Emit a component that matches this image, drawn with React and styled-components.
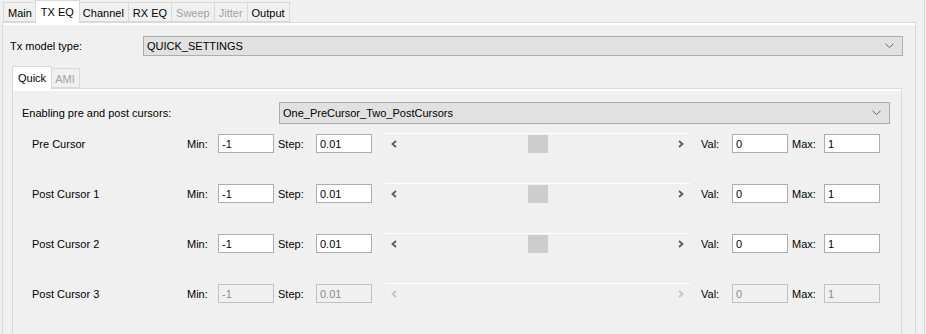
import styled, { createGlobalStyle } from 'styled-components';

const GlobalStyle = createGlobalStyle`
    html, body {
        margin: 0;
        padding: 0;
        background: #f0f0f0;
    }
    body {
        font-family: "Liberation Sans", Arial, sans-serif;
        font-size: 11px;
        color: #000;
    }
`

const Window = styled.div`
    width: 925px;
    height: 334px;
    overflow: hidden;
    border-right: 1px solid #dadada;
    background: #f0f0f0;
    display: flex;
    flex-direction: column;
    padding: 0 8px 0 2px;
    box-sizing: border-box;
`

const TabBar = styled.div`
    display: flex;
    align-items: flex-end;
    height: 22px;
    padding-left: ${p => p.$inset || 0}px;
    position: relative;
    z-index: 1;
`

const Tab = styled.div`
    box-sizing: border-box;
    height: ${p => (p.$active ? 23 : 20)}px;
    padding: 0 ${p => (p.$active ? 5 : 4)}px;
    margin-left: ${p => (p.$active ? -2 : -1)}px;
    margin-right: ${p => (p.$active ? -1 : 0)}px;
    margin-bottom: ${p => (p.$active ? -1 : 0)}px;
    display: flex;
    align-items: center;
    padding-top: ${p => (p.$active ? 0 : 1)}px;
    border: 1px solid #d9d9d9;
    border-bottom: ${p => (p.$active ? 'none' : '1px solid #d9d9d9')};
    background: ${p => (p.$active ? '#fff' : '#f0f0f0')};
    color: ${p => (p.$disabled ? '#a3a3a3' : '#000')};
    position: relative;
    z-index: ${p => (p.$active ? 2 : 1)};
    white-space: nowrap;

    &:first-child {
        margin-left: 0;
    }
`

const Pane = styled.div`
    flex: 1;
    box-sizing: border-box;
    border: 1px solid #d9d9d9;
    border-bottom: none;
    box-shadow: inset 0 2px 0 #fff;
    padding: ${p => p.$pad};
    display: flex;
    flex-direction: column;
`

const FieldRow = styled.div`
    display: grid;
    grid-template-columns: ${p => p.$labelWidth}px 1fr;
    align-items: center;
`

const Combo = styled.div`
    height: ${p => p.$h}px;
    box-sizing: border-box;
    background: #e1e1e1;
    border: 1px solid #adadad;
    display: flex;
    align-items: center;
    justify-content: space-between;
    padding: 0 8px 0 3px;
`

const Chevron = () => (
    <svg width="9" height="6" viewBox="0 0 9 6">
        <polyline points="0.5,0.8 4.5,4.6 8.5,0.8" fill="none" stroke="#666" strokeWidth="1" />
    </svg>
)

const SubTabs = styled.div`
    margin: 10px 1px 0 2px;
    flex: 1;
    display: flex;
    flex-direction: column;
`

const CursorList = styled.div`
    display: flex;
    flex-direction: column;
    gap: 31px;
    margin-top: 10px;
`

const CursorRow = styled.div`
    display: grid;
    grid-template-columns: 165px 31px 60px 38px 69px 316px 31px 60px 32px 56px;
    align-items: center;
    height: 19px;
    color: #000;
`

const RowLabel = styled.span`
    padding-left: 10px;
`

const Field = styled.div`
    width: 56px;
    height: 19px;
    box-sizing: border-box;
    border: 1px solid ${p => (p.$disabled ? '#c2c2c2' : '#adadad')};
    background: ${p => (p.$disabled ? '#f0f0f0' : '#fff')};
    color: ${p => (p.$disabled ? '#8c8c8c' : '#000')};
    padding-left: 3px;
    display: flex;
    align-items: center;
`

const Slider = styled.div`
    width: 305px;
    height: 20px;
    margin-top: -1px;
    box-sizing: border-box;
    border-top: 1px solid #fff;
    display: flex;
    align-items: center;
    padding: 0 6px;
`

const Track = styled.div`
    flex: 1;
    display: flex;
    justify-content: center;
    align-items: center;
`

const Thumb = styled.div`
    width: 20px;
    height: 18px;
    background: #cdcdcd;
`

const Arrow = ({ dir, muted }) => (
    <svg width="6" height="8" viewBox="0 0 6 8">
        <polyline
            points={dir === 'left' ? '5,1 1.5,4 5,7' : '1,1 4.5,4 1,7'}
            fill="none"
            stroke={muted ? '#c4c4c4' : '#5a5a5a'}
            strokeWidth="1.8"
        />
    </svg>
)

const cursors = [
    { name: 'Pre Cursor' },
    { name: 'Post Cursor 1' },
    { name: 'Post Cursor 2' },
    { name: 'Post Cursor 3', disabled: true },
]

const App = () => {
    return (
        <>
            <GlobalStyle />
            <Window>
                <TabBar $inset={1}>
                    <Tab>Main</Tab>
                    <Tab $active>TX EQ</Tab>
                    <Tab>Channel</Tab>
                    <Tab>RX EQ</Tab>
                    <Tab $disabled>Sweep</Tab>
                    <Tab $disabled>Jitter</Tab>
                    <Tab>Output</Tab>
                </TabBar>
                <Pane $pad="13px 12px 0 7px">
                    <FieldRow $labelWidth={133}>
                        <span>Tx model type:</span>
                        <Combo $h={20}>
                            <span>QUICK_SETTINGS</span>
                            <Chevron />
                        </Combo>
                    </FieldRow>
                    <SubTabs>
                        <TabBar>
                            <Tab $active>Quick</Tab>
                            <Tab $disabled>AMI</Tab>
                        </TabBar>
                        <Pane $pad="13px 11px 0 9px">
                            <FieldRow $labelWidth={257}>
                                <span>Enabling pre and post cursors:</span>
                                <Combo $h={22}>
                                    <span>One_PreCursor_Two_PostCursors</span>
                                    <Chevron />
                                </Combo>
                            </FieldRow>
                            <CursorList>
                                {cursors.map(c => (
                                    <CursorRow key={c.name}>
                                        <RowLabel>{c.name}</RowLabel>
                                        <span>Min:</span>
                                        <Field $disabled={c.disabled}>-1</Field>
                                        <span>Step:</span>
                                        <Field $disabled={c.disabled}>0.01</Field>
                                        <Slider>
                                            <Arrow dir="left" muted={c.disabled} />
                                            <Track>{!c.disabled && <Thumb />}</Track>
                                            <Arrow dir="right" muted={c.disabled} />
                                        </Slider>
                                        <span>Val:</span>
                                        <Field $disabled={c.disabled}>0</Field>
                                        <span>Max:</span>
                                        <Field $disabled={c.disabled}>1</Field>
                                    </CursorRow>
                                ))}
                            </CursorList>
                        </Pane>
                    </SubTabs>
                </Pane>
            </Window>
        </>
    )
}

export default App;
